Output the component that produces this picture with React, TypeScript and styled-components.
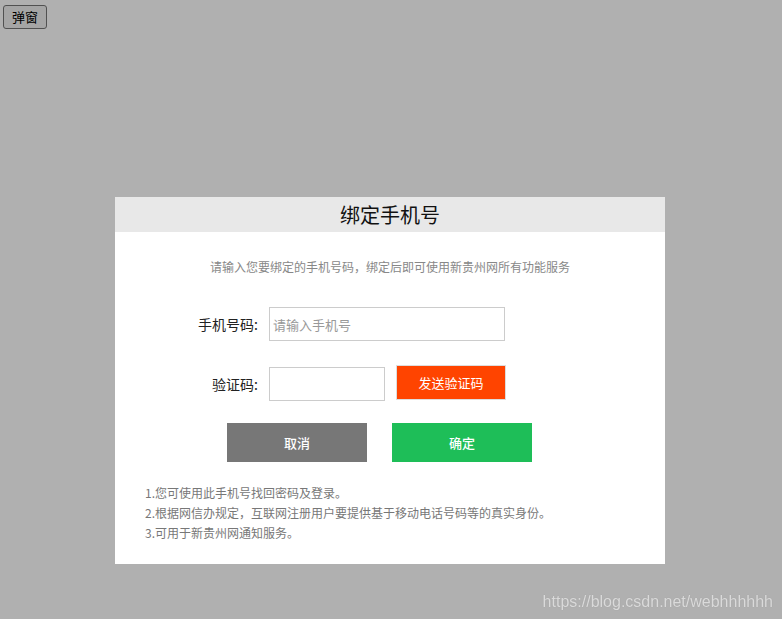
import styled, { createGlobalStyle } from 'styled-components';

const GlobalStyle = createGlobalStyle`
  html, body {
    margin: 0;
    padding: 0;
    background: #fff;
  }
  body {
    font-family: "Liberation Sans", "Noto Sans CJK SC", sans-serif;
  }
  * {
    box-sizing: border-box;
  }
`;

const Page = styled.div`
  padding: 5px 3px;
`;

const OpenButton = styled.button`
  height: 24px;
  padding: 0 8px;
  font-family: "Noto Sans CJK SC", sans-serif;
  font-size: 13px;
  line-height: 20px;
  color: #000;
  background: #efefef;
  border: 1px solid #767676;
  border-radius: 3px;
`;

const Overlay = styled.div`
  position: fixed;
  inset: 0;
  background: rgba(0, 0, 0, 0.31);
  display: flex;
  flex-direction: column;
  align-items: center;
  padding: 197px 2px 0 0;
`;

const Modal = styled.div`
  width: 550px;
  background: #fff;
  font-family: "Noto Sans CJK SC", sans-serif;
  padding-bottom: 21px;
`;

const Header = styled.div`
  height: 35px;
  background: #e8e8e8;
  display: flex;
  align-items: center;
  justify-content: center;
  font-size: 20px;
  color: #111;
`;

const Intro = styled.p`
  margin: 25px 0 30px;
  text-align: center;
  font-size: 12px;
  line-height: 20px;
  color: #888;
`;

const FormRow = styled.div<{ $gap?: number }>`
  display: flex;
  align-items: center;
  padding-left: 43px;
  margin-bottom: ${props => props.$gap ?? 26}px;
`;

const Label = styled.label`
  width: 100px;
  margin-right: 11px;
  text-align: right;
  font-size: 14px;
  color: #222;
`;

const Input = styled.input<{ $width: number }>`
  width: ${props => props.$width}px;
  height: 34px;
  padding: 0 3px;
  border: 1px solid #ccc;
  outline: none;
  font-family: "Noto Sans CJK SC", sans-serif;
  font-size: 13px;
  color: #333;

  &::placeholder {
    color: #999;
  }
`;

const CodeButton = styled.button`
  width: 110px;
  height: 35px;
  margin-left: 11px;
  margin-top: -3px;
  border: 1px solid #ddd;
  background: #ff4400;
  color: #fff;
  font-family: "Noto Sans CJK SC", sans-serif;
  font-size: 13px;
`;

const Actions = styled.div`
  display: flex;
  gap: 25px;
  padding-left: 112px;
`;

const ActionButton = styled.button<{ $color: string }>`
  width: 140px;
  height: 39px;
  border: none;
  background: ${props => props.$color};
  color: #fff;
  font-family: "Noto Sans CJK SC", sans-serif;
  font-size: 13px;
  font-weight: 500;
`;

const Notes = styled.ul`
  list-style: none;
  margin: 21px 0 0;
  padding: 0 0 0 30px;
  font-size: 12px;
  line-height: 20px;
  color: #777;
`;

const Watermark = styled.div`
  position: fixed;
  right: 9px;
  bottom: 8px;
  font-family: "Liberation Sans", Arial, sans-serif;
  font-size: 16px;
  color: #dadada;
  text-shadow: 0 0 1px rgba(0, 0, 0, 0.15);
`;

const notes = [
  '1.您可使用此手机号找回密码及登录。',
  '2.根据网信办规定，互联网注册用户要提供基于移动电话号码等的真实身份。',
  '3.可用于新贵州网通知服务。',
];

export default function App() {
  return (
    <>
      <GlobalStyle />
      <Page>
        <OpenButton>弹窗</OpenButton>
      </Page>
      <Overlay>
        <Modal>
          <Header>绑定手机号</Header>
          <Intro>请输入您要绑定的手机号码，绑定后即可使用新贵州网所有功能服务</Intro>
          <FormRow>
            <Label>手机号码:</Label>
            <Input $width={236} placeholder="请输入手机号" />
          </FormRow>
          <FormRow $gap={22}>
            <Label>验证码:</Label>
            <Input $width={116} />
            <CodeButton>发送验证码</CodeButton>
          </FormRow>
          <Actions>
            <ActionButton $color="#777">取消</ActionButton>
            <ActionButton $color="#1ebe58">确定</ActionButton>
          </Actions>
          <Notes>
            {notes.map(n => (
              <li key={n}>{n}</li>
            ))}
          </Notes>
        </Modal>
      </Overlay>
      <Watermark>https://blog.csdn.net/webhhhhhh</Watermark>
    </>
  );
}
